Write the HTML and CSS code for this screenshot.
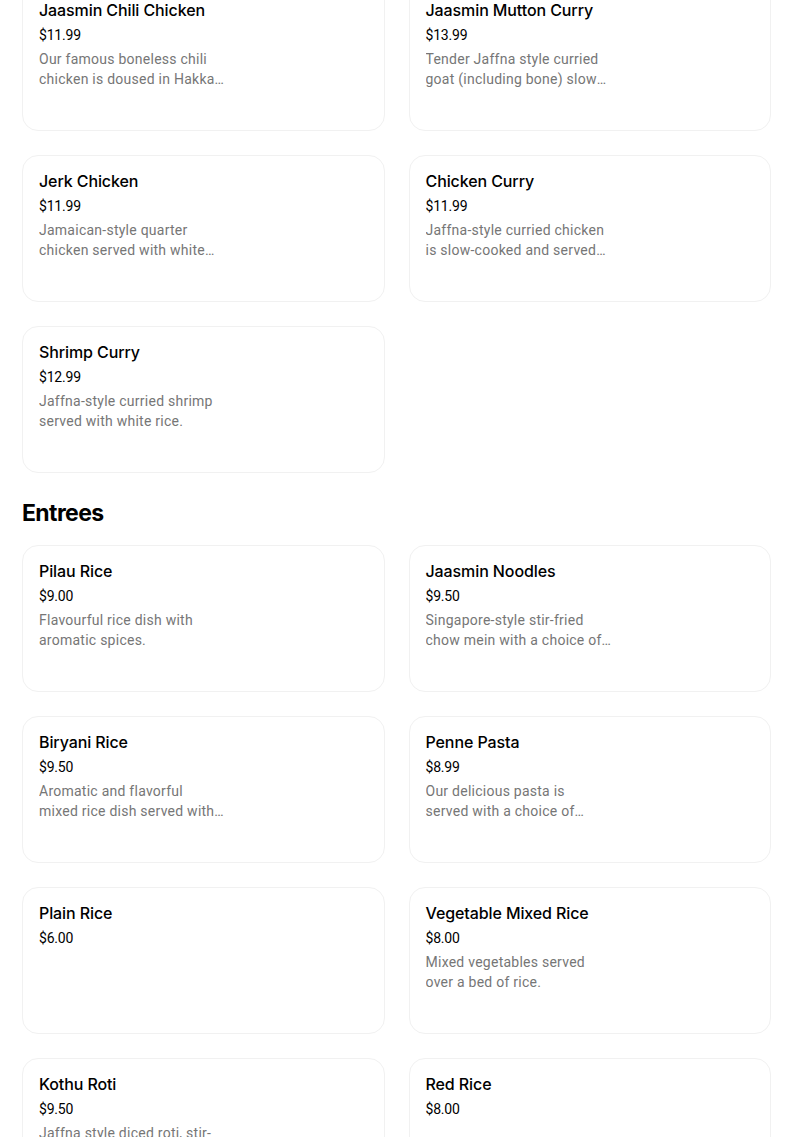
FILE: index.html
```html
<!DOCTYPE html>
<html lang="en">
<head>
  <meta charset="UTF-8" />
  <meta name="viewport" content="width=device-width, initial-scale=1.0" />
  <title>Jaasmin Menu</title>
  <link rel="stylesheet" href="styles.css">
</head>
<body>
  <div class="menu">
    <section class="category first">
      <div class="items">
        <div class="item">
          <h3>Jaasmin Chili Chicken</h3>
          <p class="price">$11.99</p>
          <p class="desc">Our famous boneless chili chicken is doused in Hakka style sauce and served with rice.</p>
        </div>
        <div class="item">
          <h3>Jaasmin Mutton Curry</h3>
          <p class="price">$13.99</p>
          <p class="desc">Tender Jaffna style curried goat (including bone) slow cooked and served with rice.</p>
        </div>
        <div class="item">
          <h3>Jerk Chicken</h3>
          <p class="price">$11.99</p>
          <p class="desc">Jamaican-style quarter chicken served with white rice and salad.</p>
        </div>
        <div class="item">
          <h3>Chicken Curry</h3>
          <p class="price">$11.99</p>
          <p class="desc">Jaffna-style curried chicken is slow-cooked and served with white rice.</p>
        </div>
        <div class="item">
          <h3>Shrimp Curry</h3>
          <p class="price">$12.99</p>
          <p class="desc">Jaffna-style curried shrimp served with white rice.</p>
        </div>
      </div>
    </section>

    <section class="category">
      <h2>Entrees</h2>
      <div class="items">
        <div class="item">
          <h3>Pilau Rice</h3>
          <p class="price">$9.00</p>
          <p class="desc">Flavourful rice dish with aromatic spices.</p>
        </div>
        <div class="item">
          <h3>Jaasmin Noodles</h3>
          <p class="price">$9.50</p>
          <p class="desc">Singapore-style stir-fried chow mein with a choice of chicken, shrimp or vegetables.</p>
        </div>
        <div class="item">
          <h3>Biryani Rice</h3>
          <p class="price">$9.50</p>
          <p class="desc">Aromatic and flavorful mixed rice dish served with raita and boiled egg.</p>
        </div>
        <div class="item">
          <h3>Penne Pasta</h3>
          <p class="price">$8.99</p>
          <p class="desc">Our delicious pasta is served with a choice of chicken or vegetables.</p>
        </div>
        <div class="item">
          <h3>Plain Rice</h3>
          <p class="price">$6.00</p>
        </div>
        <div class="item">
          <h3>Vegetable Mixed Rice</h3>
          <p class="price">$8.00</p>
          <p class="desc">Mixed vegetables served over a bed of rice.</p>
        </div>
        <div class="item">
          <h3>Kothu Roti</h3>
          <p class="price">$9.50</p>
          <p class="desc">Jaffna style diced roti, stir-fried with egg, vegetables and spices.</p>
        </div>
        <div class="item">
          <h3>Red Rice</h3>
          <p class="price">$8.00</p>
        </div>
      </div>
    </section>
  </div>
</body>
</html>
```

FILE: styles.css
```css
body {
  margin: 0;
  font-family: Inter, "Noto Sans", Arial, sans-serif;
  background: #fff;
  color: #000;
}
.menu {
  padding: 0 33px 0 22px;
}
.category.first {
  margin-top: -16px;
}
.category h2 {
  margin: 24px 0 16px;
  font-size: 23px;
  line-height: 32px;
  font-weight: 700;
  letter-spacing: -0.6px;
}
.items {
  display: grid;
  grid-template-columns: 1fr 1fr;
  gap: 24px;
}
.item {
  height: 114px;
  padding: 15px 16px 16px;
  border: 1px solid #f1f1f1;
  border-radius: 16px;
}
.item h3 {
  margin: 0;
  font-size: 16px;
  line-height: 20px;
  font-weight: 500;
  letter-spacing: -0.1px;
}
.price {
  margin: 5px 0 0;
  font-family: Roboto, Arial, sans-serif;
  font-size: 14px;
  line-height: 20px;
  letter-spacing: -0.2px;
}
.desc {
  margin: 4px 0 0;
  max-width: 186px;
  font-family: Roboto, Arial, sans-serif;
  font-size: 14px;
  line-height: 20px;
  letter-spacing: 0.25px;
  color: #767676;
  display: -webkit-box;
  -webkit-line-clamp: 2;
  -webkit-box-orient: vertical;
  overflow: hidden;
}
```
